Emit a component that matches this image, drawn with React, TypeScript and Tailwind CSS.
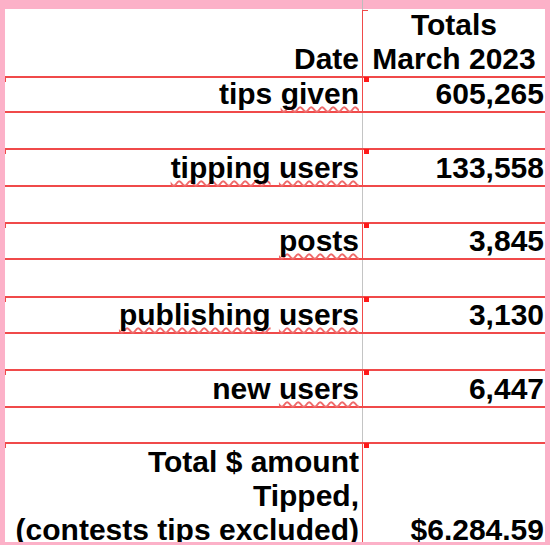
import React from "react";

type Word = { t: string; wavy?: boolean };

const RED = "border-[#f04a4a]";

function Label({ words }: { words: Word[] }) {
  return (
    <span className="whitespace-pre">
      {words.map((w, i) => (
        <React.Fragment key={i}>
          {i > 0 ? " " : ""}
          {w.wavy ? (
            <span className="underline decoration-wavy decoration-[#ee6a6a] decoration-[1.5px] underline-offset-[2px] [text-decoration-skip-ink:none]">
              {w.t}
            </span>
          ) : (
            <span>{w.t}</span>
          )}
        </React.Fragment>
      ))}
    </span>
  );
}

function BoxRow({
  words,
  value,
  h,
}: {
  words: Word[];
  value: string;
  h: string;
}) {
  return (
    <div className={`flex shrink-0 border-y-2 ${RED} ${h}`}>
      <div className="relative w-[358px] border-r border-[#f04a4a] flex items-end justify-end pr-[3px]">
        <div className="absolute left-0 top-0 w-px h-[4px] bg-[#f04a4a]" />
        <Label words={words} />
      </div>
      <div className="relative flex-1 flex items-end justify-end pr-[1px]">
        <div className="absolute left-[1px] top-[-1px] w-[5px] h-[5px] bg-[#ff1a1a]" />
        {value}
      </div>
    </div>
  );
}

function GapRow({ h }: { h: string }) {
  return (
    <div className={`flex shrink-0 ${h}`}>
      <div className="w-[358px] border-r border-[#c4c4c4]" />
      <div className="flex-1" />
    </div>
  );
}

export default function App() {
  return (
    <div className="w-[550px] h-[545px] bg-[#fcb1c8] flex flex-col">
      <div className="h-[9px] shrink-0 flex">
        <div className="ml-[362px] w-px h-full bg-[#bdbdbd]" />
      </div>
      <div className="mx-[5px] h-[533px] shrink-0 bg-white overflow-hidden flex flex-col font-['Liberation_Sans',Arial,sans-serif] font-bold text-[30px] leading-[34px] text-black">
        {/* header */}
        <div className="flex shrink-0 h-[67px]">
          <div className="w-[358px] border-r border-[#bdbdbd] flex items-end justify-end pr-[3px]">
            Date
          </div>
          <div className="relative flex-1 flex flex-col items-center justify-end">
            <div className="absolute left-[-1px] top-[1px] bottom-0 w-px bg-[#f04a4a]" />
            <div className="absolute left-0 top-[1px] w-[5px] h-px bg-[#f04a4a]" />
            <div>Totals</div>
            <div>March 2023</div>
          </div>
        </div>

        <BoxRow
          words={[{ t: "tips" }, { t: "given", wavy: true }]}
          value="605,265"
          h="h-[37px]"
        />
        <GapRow h="h-[35px]" />
        <BoxRow
          words={[
            { t: "tipping", wavy: true },
            { t: "users", wavy: true },
          ]}
          value="133,558"
          h="h-[39px]"
        />
        <GapRow h="h-[35px]" />
        <BoxRow
          words={[{ t: "posts", wavy: true }]}
          value="3,845"
          h="h-[38px]"
        />
        <GapRow h="h-[36px]" />
        <BoxRow
          words={[
            { t: "publishing", wavy: true },
            { t: "users", wavy: true },
          ]}
          value="3,130"
          h="h-[38px]"
        />
        <GapRow h="h-[35px]" />
        <BoxRow
          words={[{ t: "new" }, { t: "users", wavy: true }]}
          value="6,447"
          h="h-[39px]"
        />
        <GapRow h="h-[34px]" />

        {/* total row */}
        <div className={`flex border-t-2 ${RED} h-[105px] shrink-0`}>
          <div className="relative w-[358px] border-r border-[#f04a4a] flex flex-col items-end justify-end pr-[3px]">
            <div className="absolute left-0 top-0 w-px h-[4px] bg-[#f04a4a]" />
            <div className="whitespace-pre">Total $ amount</div>
            <div>Tipped,</div>
            <div className="whitespace-pre">(contests tips excluded)</div>
          </div>
          <div className="relative flex-1 flex items-end justify-end pr-[1px]">
            <div className="absolute left-[1px] top-[-1px] w-[5px] h-[5px] bg-[#ff1a1a]" />
            $6.284.59
          </div>
        </div>
      </div>
    </div>
  );
}
